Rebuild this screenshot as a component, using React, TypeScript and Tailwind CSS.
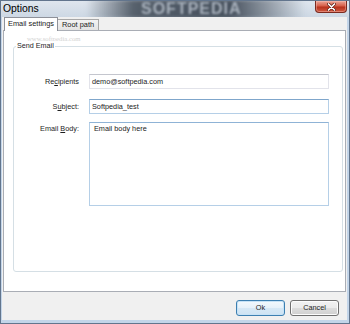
import React from "react";

function Label({ children }: { children: React.ReactNode }) {
  return (
    <div className="w-[65px] shrink-0 text-right text-[7.3px] leading-[10px] text-[#1e1e1e] whitespace-nowrap">
      {children}
    </div>
  );
}

export default function App() {
  return (
    <div className="w-[350px] h-[324px] bg-[#c3d5e9] border border-[#62758d] flex flex-col overflow-hidden font-['Liberation_Sans',Arial,sans-serif] text-[#1b1b1b]">
      {/* Title bar */}
      <div className="relative h-[16px] shrink-0 flex items-start justify-between bg-[linear-gradient(180deg,#dfe6ee,#cdd8e4)] overflow-hidden">
        <div
          aria-hidden
          className="absolute left-[85px] top-[-2px] w-[220px] h-[20px] bg-[linear-gradient(90deg,rgba(60,70,82,0),rgba(62,72,84,0.85)_22%,rgba(55,65,78,0.9)_65%,rgba(60,70,82,0))] blur-[2px]"
        />
        <span
          aria-hidden
          className="absolute left-[140px] top-0 text-[16px] font-bold leading-[15px] text-[#aab3be] blur-[0.8px] tracking-[1px]"
        >
          SOFTPEDIA
        </span>
        <span className="relative text-[10.4px] leading-[15px] pl-[2px] text-black">Options</span>
        <div className="relative mr-[2px] w-[32px] h-[12px] rounded-b-[4px] border border-t-0 border-[#7b2a1f] bg-[linear-gradient(180deg,#eba597,#d65f49_45%,#b8321d_55%,#cf5a42)] flex items-center justify-center shadow-[inset_0_0_0_1px_rgba(255,200,190,0.4)]">
          <svg width="9" height="8" viewBox="0 0 9 8">
            <path d="M1.5 1 L7.5 7 M7.5 1 L1.5 7" stroke="#5a1a10" strokeWidth="3" strokeLinecap="round" />
            <path d="M1.5 1 L7.5 7 M7.5 1 L1.5 7" stroke="#ffffff" strokeWidth="1.7" strokeLinecap="round" />
          </svg>
        </div>
      </div>

      {/* Body */}
      <div className="flex-1 ml-[1px] mr-[2px] mb-[3px] bg-[#f0f0f0] flex flex-col">
        {/* Tabs */}
        <div className="flex items-end h-[13px] shrink-0 pl-[2px] relative z-10">
          <div className="h-[14px] -mb-[1px] px-[3px] bg-white border border-b-0 border-[#8e9199] text-[7.4px] leading-[12px] whitespace-nowrap">
            Email settings
          </div>
          <div className="h-[11px] px-[4px] border border-l-0 border-b-0 border-[#a7a7a7] bg-[linear-gradient(180deg,#f3f3f3,#e3e3e3)] text-[7.4px] leading-[10px] whitespace-nowrap">
            Root path
          </div>
        </div>

        {/* Panel */}
        <div className="relative flex-1 ml-[1px] mr-[1px] bg-white border border-[#a9adb5] flex flex-col">
          <span
            aria-hidden
            className="absolute left-[23px] top-[4px] text-[6.7px] leading-[8px] text-[#d2d2d2] font-['Liberation_Serif',serif]"
          >
            www.softpedia.com
          </span>

          {/* Group box */}
          <div className="relative flex-1 ml-[9px] mr-[2px] mt-[15px] mb-[19px] border border-[#d5dfe5] rounded-[3px]">
            <span className="absolute top-[-6px] left-[2px] px-[1px] bg-white text-[7.2px] leading-[10px] text-[#1e1e1e]">
              Send Email
            </span>
            <div className="flex flex-col pt-[27px]">
              <div className="flex items-center">
                <Label>
                  Re<span className="underline">c</span>ipients
                </Label>
                <div className="ml-[10px] w-[240px] h-[15px] border border-[#e2e3ea] border-t-[#c4c6ce] bg-white pl-[2px] text-[7.3px] leading-[13px]">
                  demo@softpedia.com
                </div>
              </div>
              <div className="flex items-center mt-[10px]">
                <Label>
                  S<span className="underline">u</span>bject:
                </Label>
                <div className="ml-[10px] w-[240px] h-[15px] border border-[#b5cfe7] border-t-[#7fa6cb] bg-white pl-[2px] text-[7.3px] leading-[13px]">
                  Softpedia_test
                </div>
              </div>
              <div className="flex items-start mt-[8px]">
                <div className="mt-[2px]">
                  <Label>
                    Email <span className="underline">B</span>ody:
                  </Label>
                </div>
                <div className="ml-[10px] w-[240px] h-[84px] border border-[#b5cfe7] border-t-[#8fb3d6] bg-white pl-[4px] pt-[1px] text-[7.3px] leading-[10px]">
                  Email body here
                </div>
              </div>
            </div>
          </div>
        </div>

        {/* Footer */}
        <div className="h-[28px] shrink-0 flex justify-end items-start pt-[8px] pr-[8px] gap-[5px]">
          <button className="w-[49px] h-[16px] rounded-[3px] border border-[#3c7fb1] bg-[linear-gradient(180deg,#f3f9fd,#e6f1fa_50%,#d6e8f6_50%,#cde3f3)] shadow-[inset_0_0_0_1px_#c6e2f6] text-[7.3px] leading-[14px] text-[#1e1e1e]">
            Ok
          </button>
          <button className="w-[49px] h-[16px] rounded-[3px] border border-[#707070] bg-[linear-gradient(180deg,#f2f2f2,#ebebeb_50%,#dddddd_50%,#cfcfcf)] shadow-[inset_0_0_0_1px_#fcfcfc] text-[7.3px] leading-[14px] text-[#1e1e1e]">
            Cancel
          </button>
        </div>
      </div>
    </div>
  );
}
